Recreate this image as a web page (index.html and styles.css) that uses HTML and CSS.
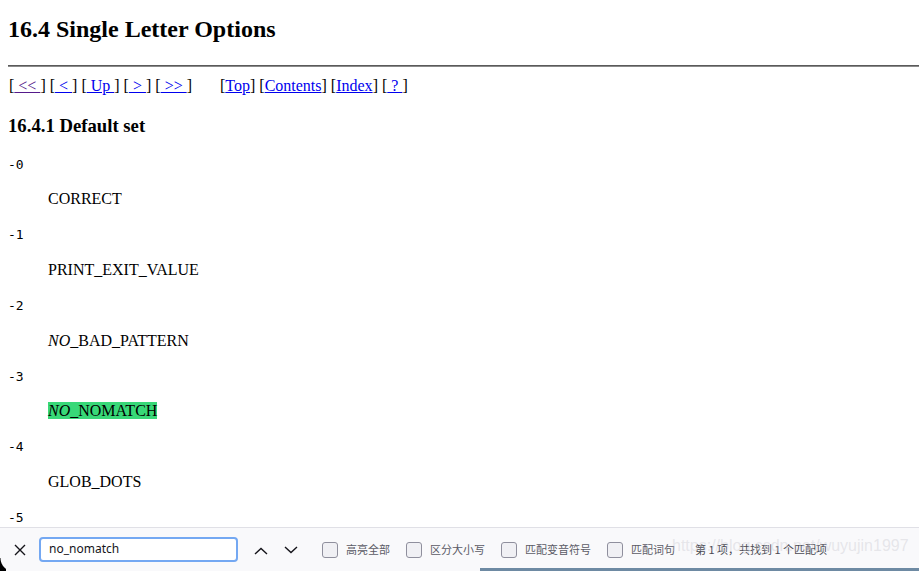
FILE: index.html
```html
<!DOCTYPE html>
<html lang="en">
<head>
<meta charset="utf-8">
<title>16.4 Single Letter Options</title>
<link rel="stylesheet" href="styles.css">
</head>
<body>
<h2 class="title">16.4 Single Letter Options</h2>
<hr class="rule">
<p class="nav">[<a class="visited" href="#"> &lt;&lt; </a>] [<a href="#"> &lt; </a>] [<a href="#"> Up </a>] [<a href="#"> &gt; </a>] [<a href="#"> &gt;&gt; </a>]&nbsp; &nbsp; &nbsp; &nbsp;[<a href="#">Top</a>] [<a href="#">Contents</a>] [<a href="#">Index</a>] [<a href="#"> ? </a>]</p>
<h3 class="sub">16.4.1 Default set</h3>
<dl class="opts">
  <dt><code>-0</code></dt>
  <dd>CORRECT</dd>
  <dt><code>-1</code></dt>
  <dd>PRINT_EXIT_VALUE</dd>
  <dt><code>-2</code></dt>
  <dd><i>NO</i>_BAD_PATTERN</dd>
  <dt><code>-3</code></dt>
  <dd><span class="found"><i>NO</i>_NOMATCH</span></dd>
  <dt><code>-4</code></dt>
  <dd>GLOB_DOTS</dd>
  <dt><code>-5</code></dt>
  <dd>NOTIFY</dd>
</dl>

<div class="findbar">
  <button class="fb-close" aria-label="close">
    <svg width="12" height="12" viewBox="0 0 12 12"><path d="M1 1 L11 11 M11 1 L1 11" stroke="#15141a" stroke-width="1.4" fill="none"/></svg>
  </button>
  <div class="fb-input">no_nomatch</div>
  <button class="fb-arrow up" aria-label="previous">
    <svg width="14" height="8" viewBox="0 0 14 8"><path d="M1 7 L7 1.5 L13 7" stroke="#15141a" stroke-width="1.4" fill="none"/></svg>
  </button>
  <button class="fb-arrow down" aria-label="next">
    <svg width="14" height="8" viewBox="0 0 14 8"><path d="M1 1 L7 6.5 L13 1" stroke="#15141a" stroke-width="1.4" fill="none"/></svg>
  </button>
  <span class="fb-check first"></span><span class="fb-label">高亮全部</span>
  <span class="fb-check"></span><span class="fb-label">区分大小写</span>
  <span class="fb-check"></span><span class="fb-label">匹配变音符号</span>
  <span class="fb-check"></span><span class="fb-label">匹配词句</span>
  <span class="fb-status">第 1 项，共找到 1 个匹配项</span>
  <span class="watermark">https://blog.csdn.net/wuyujin1997</span>
  <span class="bottom-line"></span>
  <span class="corner"></span>
</div>
</body>
</html>
```

FILE: styles.css
```css
html, body {
  background: #fff;
}
body {
  margin: 0;
  padding: 15px 0 0 8px;
  font-family: "Liberation Serif", "Times New Roman", serif;
  font-size: 16px;
  line-height: 18.5px;
  color: #000;
  overflow: hidden;
}
.title {
  margin: 0;
  font-size: 24px;
  line-height: 28px;
  font-weight: bold;
}
.rule {
  margin: 22px 0 0 0;
  height: 0;
  border: 0;
  border-top: 1px solid #5a5a5a;
  border-bottom: 1px solid #8a8a8a;
}
.nav {
  margin: 9.6px 0 0 0;
  padding-left: 1px;
}
.nav a {
  color: #0000ee;
  text-decoration: underline;
}
.nav a.visited {
  color: #551a8b;
}
.sub {
  margin: 20px 0 0 0;
  font-size: 18.72px;
  line-height: 22px;
  font-weight: bold;
}
.opts {
  margin: 17.5px 0 0 0;
}
.opts dt {
  height: 18.5px;
}
.opts code {
  font-family: "DejaVu Sans Mono", "Liberation Mono", monospace;
  font-size: 13px;
  line-height: 13px;
}
.opts dd {
  margin: 17.2px 0 16.5px 40px;
  height: 18.5px;
}
.found {
  background: #38d878;
}

/* find bar */
.findbar {
  position: fixed;
  left: 0;
  right: 0;
  bottom: 0;
  height: 43px;
  border-top: 1px solid #e0e0e6;
  background: #f9f9fb;
  display: flex;
  align-items: center;
  padding-left: 8px;
  font-family: "Noto Sans CJK SC", "Noto Sans", sans-serif;
  font-size: 11px;
  color: #5b5b66;
}
.fb-close, .fb-arrow {
  border: 0;
  background: transparent;
  padding: 0;
  width: 24px;
  height: 24px;
  display: flex;
  align-items: center;
  justify-content: center;
  flex: none;
}
.fb-input {
  margin-left: 7px;
  width: 199px;
  height: 25px;
  box-sizing: border-box;
  border: 2px solid #74a8f2;
  border-radius: 4px;
  background: #fff;
  padding-left: 8px;
  display: flex;
  align-items: center;
  font-family: "Noto Sans", "Liberation Sans", sans-serif;
  font-size: 12px;
  color: #15141a;
  flex: none;
}
.fb-arrow.up {
  margin-left: 11px;
  padding-top: 2px;
}
.fb-arrow.down {
  margin-left: 6px;
}
.fb-check {
  width: 16px;
  height: 16px;
  box-sizing: border-box;
  border: 1px solid #8f8f9d;
  border-radius: 3px;
  background: #f0f0f4;
  margin-left: 16px;
  flex: none;
}
.fb-check.first {
  margin-left: 19px;
}
.fb-label {
  margin-left: 8px;
  white-space: nowrap;
}
.fb-status {
  margin-left: 20px;
  white-space: nowrap;
  color: #4a4a52;
}
.watermark {
  position: absolute;
  left: 672px;
  top: 8px;
  font-family: "Liberation Sans", Arial, sans-serif;
  font-size: 16px;
  line-height: 20px;
  color: rgba(200, 200, 208, 0.4);
  white-space: nowrap;
  pointer-events: none;
}
.bottom-line {
  position: absolute;
  left: 480px;
  right: 0;
  bottom: 0;
  height: 3px;
  background: #6e8aa3;
}
.corner {
  position: absolute;
  left: 0;
  bottom: 0;
  width: 6px;
  height: 13px;
  background: radial-gradient(circle at 14px 0, transparent 13px, #000 14px);
}
```
